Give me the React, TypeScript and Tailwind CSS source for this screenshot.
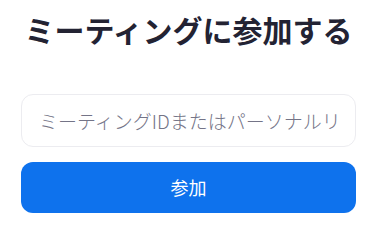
export default function App() {
  return (
    <div
      className="min-h-screen bg-white px-[21px] pt-[11px]"
      style={{ fontFamily: '"Noto Sans CJK JP", "Noto Sans", sans-serif' }}
    >
      <h1 className="text-center text-[30px] font-bold leading-[36px] text-[#232333] whitespace-nowrap">
        ミーティングに参加する
      </h1>
      <input
        type="text"
        placeholder="ミーティングIDまたはパーソナルリンク名"
        className="mt-[47px] block h-[53px] w-full rounded-[12px] border border-[#ececf0] bg-white px-[17px] text-[19px] font-light text-[#232333] placeholder:text-[#747487] outline-none"
      />
      <button
        type="button"
        className="mt-[15px] flex h-[51px] w-full items-center justify-center rounded-[12px] bg-[#0e72ed] text-[18px] text-white"
      >
        参加
      </button>
    </div>
  );
}
